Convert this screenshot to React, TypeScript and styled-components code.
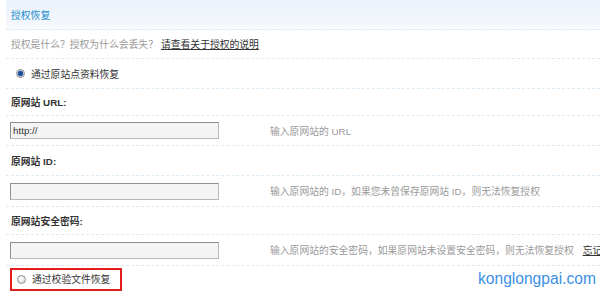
import styled, { createGlobalStyle } from "styled-components";

const GlobalStyle = createGlobalStyle`
  html, body {
    margin: 0;
    padding: 0;
    background: #ffffff;
  }
  body {
    width: 600px;
    height: 292px;
    overflow: hidden;
    font-family: "Liberation Sans", "Noto Sans CJK SC", sans-serif;
  }
`;

const Page = styled.div`
  position: relative;
  width: 600px;
  height: 292px;
  overflow: hidden;
`;

const Panel = styled.div`
  margin-left: 6px;
  display: flex;
  flex-direction: column;
  font-size: 9.8px;
  color: #333333;
`;

const Header = styled.div`
  height: 29px;
  display: flex;
  align-items: center;
  padding-left: 5px;
  background: linear-gradient(#eaf2fb, #f6f9fd);
  border-bottom: 1px dashed #dcecf7;
`;

const Title = styled.span`
  color: #1b8ccd;
  font-size: 9.8px;
`;

const Row = styled.div<{ $h: number; $pad?: number; $last?: boolean }>`
  height: ${(p) => p.$h}px;
  display: flex;
  align-items: center;
  padding-left: ${(p) => p.$pad ?? 5}px;
  border-bottom: ${(p) => (p.$last ? "none" : "1px dashed #dcecf7")};
  white-space: nowrap;
`;

const Muted = styled.span`
  color: #9a9a9a;
`;

const Link = styled.a`
  color: #333333;
  text-decoration: underline;
  margin-left: 3px;
`;

const Label = styled.span`
  font-weight: bold;
  color: #333333;
`;

const FieldRow = styled(Row)`
  display: grid;
  grid-template-columns: 260px auto;
  align-items: center;
`;

const Input = styled.div`
  box-sizing: border-box;
  width: 209px;
  height: 17px;
  background: #f4f4f4;
  border: 1px solid #b8b8b8;
  border-top-color: #8e8e8e;
  border-left-color: #8e8e8e;
  display: flex;
  align-items: center;
  padding-left: 2px;
  font-family: "Liberation Sans", sans-serif;
  font-size: 9.8px;
  color: #333333;
`;

const Hint = styled.span`
  color: #9a9a9a;
`;

const HintLink = styled.a`
  color: #333333;
  text-decoration: underline;
  margin-left: 9px;
`;

const Radio = styled.span<{ $checked?: boolean }>`
  box-sizing: border-box;
  width: 9px;
  height: 9px;
  border-radius: 50%;
  border: 1px solid #8f8f8f;
  background: ${(p) =>
    p.$checked
      ? "radial-gradient(circle, #1f4e9a 0 2.2px, #6f9bd6 2.6px, #e7e7e7 3.4px)"
      : "radial-gradient(circle at 40% 40%, #ffffff, #cfcfcf)"};
  margin-right: 6px;
  flex: none;
`;

const Option = styled.div<{ $boxed?: boolean }>`
  display: flex;
  align-items: center;
  box-sizing: border-box;
  height: ${(p) => (p.$boxed ? "23px" : "auto")};
  width: ${(p) => (p.$boxed ? "112px" : "auto")};
  padding-left: ${(p) => (p.$boxed ? "5px" : "0")};
  border: ${(p) => (p.$boxed ? "2px solid #e41c1c" : "none")};
`;

const Watermark = styled.span`
  position: absolute;
  left: 478px;
  top: 270px;
  font-family: "Liberation Sans", sans-serif;
  font-size: 15.6px;
  color: #3d8fe6;
`;

export default function App() {
  return (
    <Page>
      <GlobalStyle />
      <Panel>
        <Header>
          <Title>授权恢复</Title>
        </Header>
        <Row $h={28}>
          <Muted>授权是什么？授权为什么会丢失？</Muted>
          <Link>请查看关于授权的说明</Link>
        </Row>
        <Row $h={29} $pad={10}>
          <Option>
            <Radio $checked />
            通过原站点资料恢复
          </Option>
        </Row>
        <Row $h={26}>
          <Label>原网站 URL:</Label>
        </Row>
        <FieldRow $h={29} $pad={4}>
          <Input>http://</Input>
          <Hint>输入原网站的 URL</Hint>
        </FieldRow>
        <Row $h={29}>
          <Label>原网站 ID:</Label>
        </Row>
        <FieldRow $h={30} $pad={4}>
          <Input />
          <Hint>输入原网站的 ID，如果您未曾保存原网站 ID，则无法恢复授权</Hint>
        </FieldRow>
        <Row $h={27}>
          <Label>原网站安全密码:</Label>
        </Row>
        <FieldRow $h={30} $pad={4}>
          <Input />
          <span>
            <Hint>输入原网站的安全密码，如果原网站未设置安全密码，则无法恢复授权</Hint>
            <HintLink>忘记密码？</HintLink>
          </span>
        </FieldRow>
        <Row $h={26} $pad={4} $last>
          <Option $boxed>
            <Radio />
            通过校验文件恢复
          </Option>
        </Row>
      </Panel>
      <Watermark>konglongpai.com</Watermark>
    </Page>
  );
}
